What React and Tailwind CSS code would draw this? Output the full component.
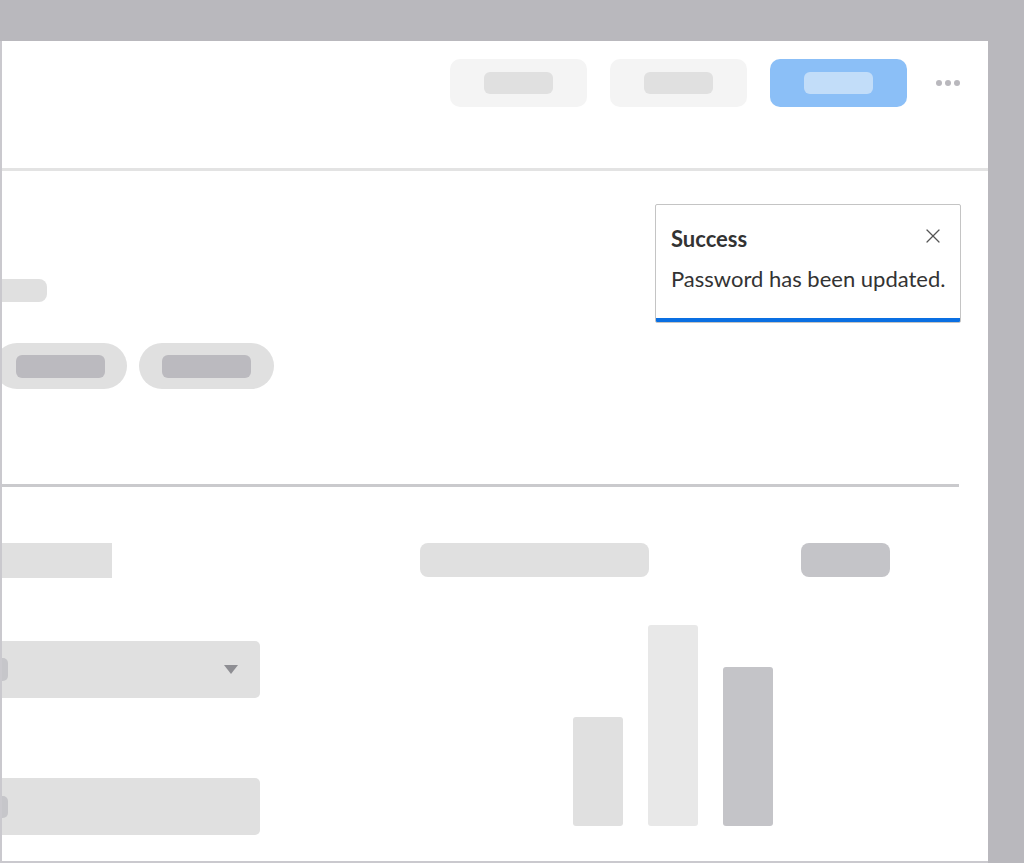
import React from 'react';
import { X } from 'lucide-react';

const App = () => {
    return (
        <div className="w-[1024px] h-[863px] bg-[#b9b8bd] pt-[41px] pr-[36px] overflow-hidden" style={{ fontFamily: 'Lato, "Open Sans", sans-serif' }}>
            <div className="relative h-[822px] bg-white border-l-2 border-b-2 border-[#cac9ce] overflow-hidden">
                {/* Header */}
                <div className="h-[130px] border-b-[3px] border-[#e3e3e3] flex items-start justify-end pt-[18px] pr-[28px]">
                    <div className="flex items-center gap-[23px]">
                        <div className="w-[137px] h-[48px] rounded-[10px] bg-[#f4f4f4] flex items-center justify-center">
                            <div className="w-[69px] h-[22px] rounded-[6px] bg-[#e0e0e0]" />
                        </div>
                        <div className="w-[137px] h-[48px] rounded-[10px] bg-[#f4f4f4] flex items-center justify-center">
                            <div className="w-[69px] h-[22px] rounded-[6px] bg-[#e0e0e0]" />
                        </div>
                        <div className="w-[137px] h-[48px] rounded-[10px] bg-[#8bbff7] flex items-center justify-center">
                            <div className="w-[69px] h-[22px] rounded-[6px] bg-[#c2ddf9]" />
                        </div>
                        <div className="flex items-center gap-[3px] ml-[6px]">
                            <span className="w-[6px] h-[6px] rounded-full bg-[#b9b8bd]" />
                            <span className="w-[6px] h-[6px] rounded-full bg-[#b9b8bd]" />
                            <span className="w-[6px] h-[6px] rounded-full bg-[#b9b8bd]" />
                        </div>
                    </div>
                </div>

                {/* Profile section */}
                <div className="h-[316px] mr-[29px] border-b-[3px] border-[#cacacd] pt-[108px]">
                    <div className="-ml-[12px] w-[57px] h-[23px] rounded-[8px] bg-[#e0e0e0]" />
                    <div className="flex gap-[12px] mt-[41px] -ml-[8px]">
                        <div className="w-[133px] h-[46px] rounded-full bg-[#e0e0e0] flex items-center justify-center">
                            <div className="w-[89px] h-[23px] rounded-[6px] bg-[#bbbabf]" />
                        </div>
                        <div className="w-[135px] h-[46px] rounded-full bg-[#e0e0e0] flex items-center justify-center">
                            <div className="w-[89px] h-[23px] rounded-[6px] bg-[#bbbabf]" />
                        </div>
                    </div>
                </div>

                {/* Details section */}
                <div className="flex pt-[56px]">
                    <div className="w-[258px] flex flex-col">
                        <div className="w-[110px] h-[35px] bg-[#e0e0e0]" />
                        <div className="mt-[63px] h-[57px] rounded-r-[5px] bg-[#e0e0e0] flex items-center justify-between pr-[22px]">
                            <div className="w-[6px] h-[23px] rounded-r-[5px] bg-[#c6c6ca]" />
                            <div className="w-0 h-0 border-l-[7px] border-r-[7px] border-t-[9px] border-l-transparent border-r-transparent border-t-[#8e8e93]" />
                        </div>
                        <div className="mt-[80px] h-[57px] rounded-r-[5px] bg-[#e0e0e0] flex items-center">
                            <div className="w-[6px] h-[22px] rounded-r-[5px] bg-[#c6c6ca]" />
                        </div>
                    </div>
                    <div className="flex flex-col pl-[160px]">
                        <div className="flex">
                            <div className="w-[229px] h-[34px] rounded-[8px] bg-[#e0e0e0]" />
                            <div className="ml-[152px] w-[89px] h-[34px] rounded-[8px] bg-[#c4c4c8]" />
                        </div>
                        <div className="mt-[48px] ml-[153px] flex items-end gap-[25px]">
                            <div className="w-[50px] h-[109px] rounded-[3px] bg-[#e0e0e0]" />
                            <div className="w-[50px] h-[201px] rounded-[3px] bg-[#e8e8e8]" />
                            <div className="w-[50px] h-[159px] rounded-[3px] bg-[#c4c4c8]" />
                        </div>
                    </div>
                </div>

                {/* Toast */}
                <div className="absolute left-[653px] top-[163px] w-[306px] h-[119px] bg-white border border-[#c4c4c4] rounded-[2px] overflow-hidden flex flex-col">
                    <div className="flex-1 pl-[15px] pr-[16px] pt-[20px] text-[#333333]">
                        <div className="flex items-center justify-between">
                            <span className="text-[22px] leading-[28px] font-bold">Success</span>
                            <X size={24} strokeWidth={1.2} className="text-[#555555] -mt-[6px] -mr-[1px]" />
                        </div>
                        <p className="mt-[12px] text-[22px] leading-[28px] whitespace-nowrap">Password has been updated.</p>
                    </div>
                    <div className="h-[4px] bg-[#0a6fe2]" />
                </div>
            </div>
        </div>
    );
};

export default App;
